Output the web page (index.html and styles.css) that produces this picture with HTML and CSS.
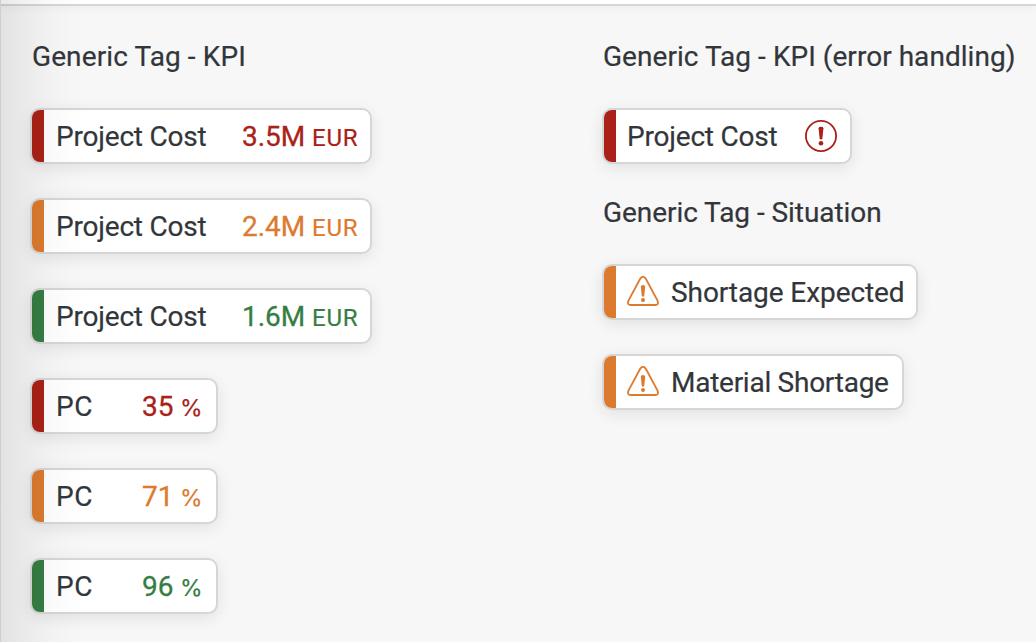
FILE: index.html
```html
<!DOCTYPE html>
<html lang="en">
<head>
<meta charset="utf-8">
<title>Generic Tag</title>
<link rel="stylesheet" href="styles.css">
</head>
<body>
<header class="topbar"></header>
<main class="content">
  <section class="column">
    <h2 class="title title-kpi">Generic Tag - KPI</h2>
    <div class="tag tag-cost error"><span class="label cost">Project Cost</span><span class="value">3.5M</span><span class="unit">EUR</span></div>
    <div class="tag tag-cost warning"><span class="label cost">Project Cost</span><span class="value">2.4M</span><span class="unit">EUR</span></div>
    <div class="tag tag-cost success"><span class="label cost">Project Cost</span><span class="value">1.6M</span><span class="unit">EUR</span></div>
    <div class="tag tag-pc error"><span class="label pc">PC</span><span class="value">35</span><span class="unit percent">%</span></div>
    <div class="tag tag-pc warning"><span class="label pc">PC</span><span class="value">71</span><span class="unit percent">%</span></div>
    <div class="tag tag-pc success"><span class="label pc">PC</span><span class="value">96</span><span class="unit percent">%</span></div>
  </section>
  <section class="column column-status">
    <h2 class="title title-error">Generic Tag - KPI (error handling)</h2>
    <div class="tag tag-error error"><span class="label cost">Project Cost</span>
      <svg class="icon-error" viewBox="0 0 32 32"><circle cx="16" cy="16" r="15.1" fill="none" stroke="currentColor" stroke-width="1.8"/><path d="M13.6 8.2Q13.6 6.8 16 6.8T18.4 8.2L17.4 18.2Q17.2 19.4 16 19.4T14.6 18.2Z" fill="currentColor"/><circle cx="16" cy="23.2" r="2.3" fill="currentColor"/></svg>
    </div>
    <h2 class="title title-situation">Generic Tag - Situation</h2>
    <div class="tag tag-expected warning">
      <svg class="icon-alert" viewBox="0 0 32 30"><path d="M13.3 2.6Q16-1.1 18.7 2.6L30.4 24.4Q32.3 29 28.2 29H3.8Q-.3 29 1.6 24.4Z" fill="none" stroke="currentColor" stroke-width="1.8"/><path d="M13.8 10.7Q13.8 9 16 9T18.2 10.7L17.3 19.3Q17 20.8 16 20.8T14.7 19.3Z" fill="currentColor"/><circle cx="16" cy="24.1" r="2" fill="currentColor"/></svg>
      <span class="label expected">Shortage Expected</span></div>
    <div class="tag tag-material warning">
      <svg class="icon-alert" viewBox="0 0 32 30"><path d="M13.3 2.6Q16-1.1 18.7 2.6L30.4 24.4Q32.3 29 28.2 29H3.8Q-.3 29 1.6 24.4Z" fill="none" stroke="currentColor" stroke-width="1.8"/><path d="M13.8 10.7Q13.8 9 16 9T18.2 10.7L17.3 19.3Q17 20.8 16 20.8T14.7 19.3Z" fill="currentColor"/><circle cx="16" cy="24.1" r="2" fill="currentColor"/></svg>
      <span class="label material">Material Shortage</span></div>
  </section>
</main>
<div class="edge-shade"></div>
</body>
</html>
```
FILE: styles.css
```css
* { box-sizing: border-box; }
body {
  margin: 0;
  height: 642px;
  overflow: hidden;
  background: #f7f7f7;
  color: #32363a;
  font-family: Roboto, "Open Sans", sans-serif;
  font-size: 28px;
}
.topbar {
  height: 6px;
  background: #fff;
  border-bottom: 2px solid #d6d6d6;
  box-shadow: 0 1px 8px rgba(0, 0, 0, .06);
}
.content {
  display: grid;
  grid-template-columns: 572px 434px;
  padding: 34px 0 0 30px;
}
.column {
  display: flex;
  flex-direction: column;
  align-items: flex-start;
  gap: 34px;
}
.title {
  margin: 0 0 0 2px;
  height: 34px;
  line-height: 34px;
  font-size: 28px;
  font-weight: 400;
  white-space: nowrap;
  -webkit-text-stroke: .2px currentColor;
}
.title-kpi { letter-spacing: .1px; }
.title-error { letter-spacing: .04px; }
.title-situation {
  margin-top: -2px;
  letter-spacing: -.06px;
}
.column-status .title { margin-left: 1px; }
.tag {
  display: flex;
  align-items: center;
  height: 56px;
  background: #fff;
  border: 2px solid #d6d6d6;
  border-radius: 10px;
  box-shadow: 0 4px 16px rgba(0, 0, 0, .09);
  color: var(--state);
  white-space: nowrap;
  line-height: 52px;
}
.tag::before {
  content: "";
  width: 12px;
  height: 52px;
  margin-right: 12px;
  flex: none;
  background: var(--state);
  border-radius: 8px 0 0 8px;
}
.column-status .tag::before { margin-right: 11px; }
.error { --state: #aa2117; }
.warning { --state: #dc7a2f; }
.success { --state: #367d43; }
.tag-cost { width: 342px; }
.tag-pc { width: 188px; }
.tag-error { width: 250px; }
.tag-expected { width: 316px; }
.tag-material { width: 302px; }
.label {
  color: #32363a;
  flex: none;
  padding-top: 2px;
  -webkit-text-stroke: .2px currentColor;
}
.cost {
  width: 186px;
  letter-spacing: -.2px;
}
.pc {
  width: 86px;
  letter-spacing: .6px;
}
.expected { letter-spacing: -.08px; }
.material { letter-spacing: -.26px; }
.value {
  flex: none;
  width: 70px;
  padding-top: 2px;
  -webkit-text-stroke: .3px currentColor;
}
.tag-pc .value { width: 38px; }
.unit {
  font-size: 24px;
  letter-spacing: .8px;
  padding-top: 4px;
  -webkit-text-stroke: .2px currentColor;
}
.percent {
  font-family: Inter, sans-serif;
  font-size: 23px;
  padding-top: 3px;
}
.tag-error .cost { width: 178px; }
.icon-error {
  width: 32px;
  height: 32px;
  flex: none;
}
.icon-alert {
  width: 32px;
  height: 30px;
  margin-right: 12px;
  margin-bottom: 2px;
  flex: none;
}
.edge-shade {
  position: absolute;
  top: 0;
  left: 0;
  width: 84px;
  height: 642px;
  border-left: 1px solid #cfcfcf;
  background: linear-gradient(to right, rgba(0, 0, 0, .085), rgba(0, 0, 0, .055) 25%, rgba(0, 0, 0, .02) 60%, transparent);
  pointer-events: none;
}
```
